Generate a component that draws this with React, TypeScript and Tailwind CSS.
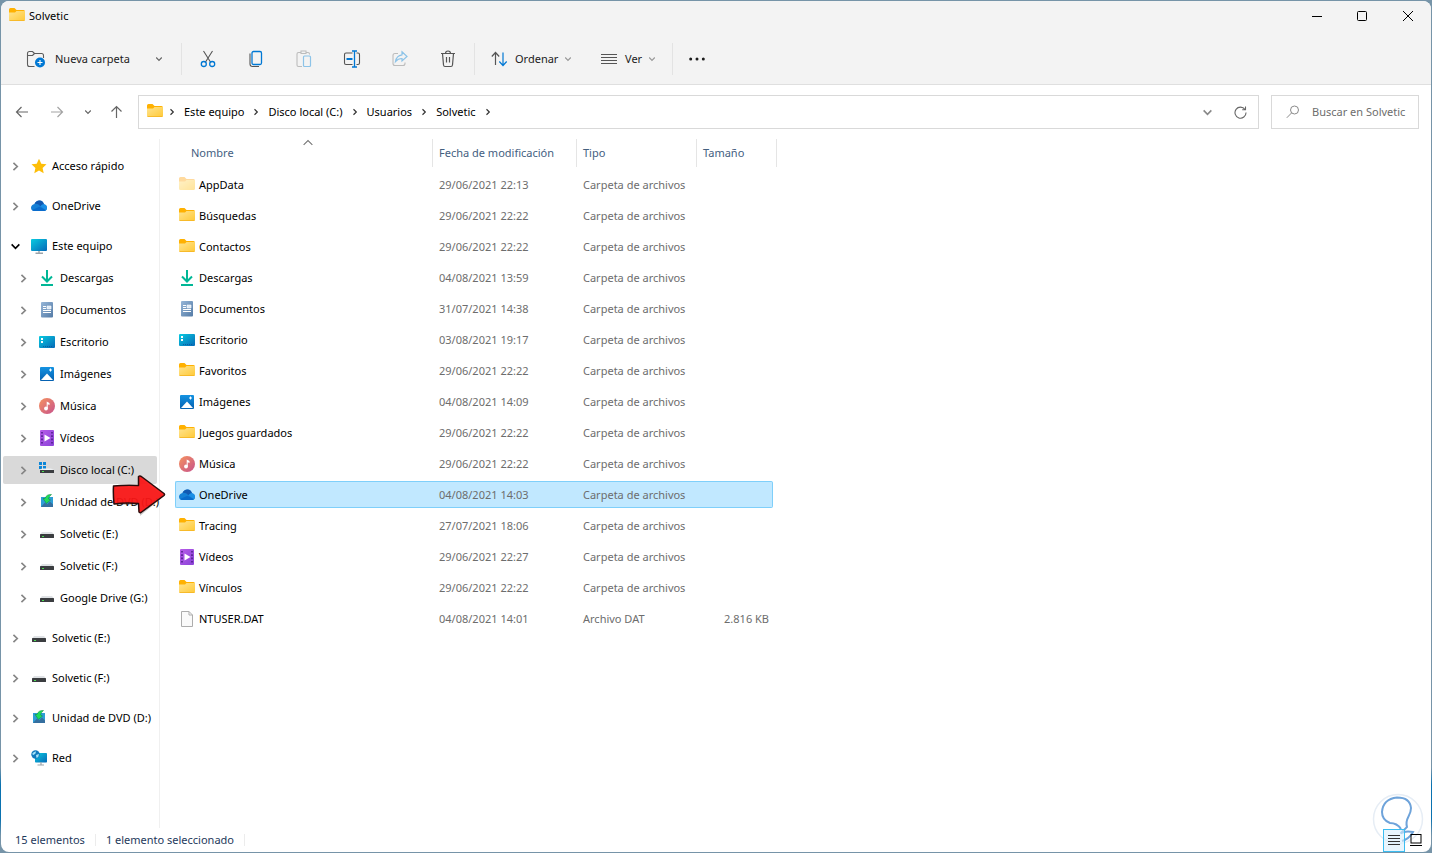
import { useState } from 'react';
import type { ReactNode } from 'react';

type IconName =
  | 'folder' | 'folderFaded' | 'download' | 'document' | 'desktop' | 'picture' | 'music' | 'video'
  | 'cloud' | 'file' | 'star' | 'computer' | 'system' | 'dvd' | 'drive' | 'network';

// Shared gradients, referenced by id from every small icon
function IconDefs() {
  return (
    <svg width="0" height="0" className="absolute" aria-hidden>
      <defs>
        <linearGradient id="gFolder" x1="0" y1="0" x2="1" y2="1">
          <stop offset="0" stopColor="#ffe48f" />
          <stop offset="1" stopColor="#ffc937" />
        </linearGradient>
        <linearGradient id="gScreen" x1="0" y1="0" x2="1" y2="1">
          <stop offset="0" stopColor="#09cbe0" />
          <stop offset="1" stopColor="#0669b8" />
        </linearGradient>
        <linearGradient id="gDoc" x1="0" y1="0" x2="1" y2="1">
          <stop offset="0" stopColor="#96b6d8" />
          <stop offset="1" stopColor="#547ba6" />
        </linearGradient>
        <linearGradient id="gPic" x1="0" y1="0" x2="0" y2="1">
          <stop offset="0" stopColor="#1493e2" />
          <stop offset="1" stopColor="#0560b0" />
        </linearGradient>
        <linearGradient id="gMusic" x1="0" y1="0" x2="1" y2="1">
          <stop offset="0" stopColor="#f6935f" />
          <stop offset="1" stopColor="#c7538c" />
        </linearGradient>
        <linearGradient id="gVideo" x1="0" y1="0" x2="1" y2="1">
          <stop offset="0" stopColor="#b75be8" />
          <stop offset="1" stopColor="#8a43d8" />
        </linearGradient>
      </defs>
    </svg>
  );
}

const drawings: Record<IconName, ReactNode> = {
  folder: (
    <>
      <path d="M0 1.500Q0 0 1.500 0H5.500L7.500 2H14.500Q16 2 16 3.500V6H0Z" fill="#ffb101" />
      <path d="M0 4.500H6L7.500 3H16V11.500Q16 13 14.500 13H1.500Q0 13 0 11.500Z" fill="url(#gFolder)" />
      <path d="M.5 12.500H15.500" stroke="#f5b41f" strokeWidth=".8" />
    </>
  ),
  folderFaded: (
    <g opacity=".5">
      <path d="M0 1.500Q0 0 1.500 0H5.500L7.500 2H14.500Q16 2 16 3.500V6H0Z" fill="#ffb640" />
      <path d="M0 4.500H6L7.500 3H16V11.500Q16 13 14.500 13H1.500Q0 13 0 11.500Z" fill="url(#gFolder)" />
    </g>
  ),
  download: (
    <g fill="none" stroke="#00b796" strokeWidth="2">
      <path d="M8 0V11M3 6.500L8 11.500L13 6.500" />
      <path d="M2 15H14" />
    </g>
  ),
  document: (
    <>
      <rect x="2" y="0" width="12" height="15.500" rx="1" fill="url(#gDoc)" />
      <path d="M4 4.500H7M4 6.500H7M4 8.500H12M4 10.500H12" stroke="#fff" strokeWidth="1" />
      <path d="M8 4H12V7H8Z" fill="#dce8f5" stroke="#fff" strokeWidth=".6" />
    </>
  ),
  desktop: (
    <>
      <rect x="0" y="2" width="16" height="12" rx="1" fill="url(#gScreen)" />
      <path d="M2 5H4M2 8H4" stroke="#fff" strokeWidth="1.800" />
      <path d="M4 12.500H14" stroke="#0a4f91" strokeWidth=".7" strokeDasharray="1 1" />
    </>
  ),
  picture: (
    <>
      <rect x="1" y="1" width="14" height="14" rx="1" fill="url(#gPic)" />
      <path d="M2 14L8 7.500L14 14Z" fill="#fff" />
      <path d="M11.500 2.500V5.500M10 4H13" stroke="#fff" strokeWidth="1" />
    </>
  ),
  music: (
    <>
      <circle cx="8" cy="8" r="8" fill="url(#gMusic)" />
      <path d="M7.700 10.500V3.500L10.500 5V7L8.700 6.200V10.500Z" fill="#fff" />
      <circle cx="7" cy="10.500" r="1.900" fill="#fff" />
    </>
  ),
  video: (
    <>
      <rect x="1" y="0" width="14" height="16" rx="1" fill="url(#gVideo)" />
      <path d="M3 2V14M13 2V14" stroke="#4b1d85" strokeWidth="1.500" strokeDasharray="1.600 1.700" />
      <path d="M5.500 4.500L11.500 8L5.500 11.500Z" fill="#fff" />
    </>
  ),
  cloud: (
    <>
      <path d="M3 13Q0 12.700 0 9.600Q.4 6.500 3.500 6Q4.800 2.500 8.500 2.500Q12 2.700 13 6.200Q16 7 16 10Q15.800 13 13 13Z" fill="#1580d6" />
      <path d="M3.500 6Q4.800 2.500 8.500 2.500Q12 2.700 13 6.200Q11 6 9.500 8.200Q6.500 5.300 3.500 6Z" fill="#1259b2" />
      <path d="M9.500 8.200Q11 6 13 6.200Q16 7 16 10Q16 11.500 15 12.300Z" fill="#1b8fe6" />
      <path d="M1 12L8.500 8.800L15 12.300Q14.200 13 13 13H3Q1.800 13 1 12Z" fill="#0a6ccc" />
    </>
  ),
  file: (
    <path d="M2.500.5H10L13.500 4V15.500H2.500ZM10 .5V4H13.500" fill="#fafafa" stroke="#adadad" strokeWidth="1" />
  ),
  star: <path d="M8 .8L10.300 5.700L15.500 6.300L11.600 9.900L12.700 15.200L8 12.500L3.300 15.200L4.400 9.900L.5 6.300L5.700 5.700Z" fill="#fdbe08" />,
  computer: (
    <>
      <rect x="0" y="1" width="16" height="12" rx="1" fill="url(#gScreen)" />
      <path d="M8 13V15M4.500 15.200H12" stroke="#9aa3aa" strokeWidth="1.400" />
    </>
  ),
  system: (
    <>
      <path d="M0 0H3V3H0ZM4 0H7V3H4ZM0 4H3V7H0ZM4 4H7V7H4Z" fill="#0b86d8" />
      <path d="M1 8L3 6.500H12L15 8Z" fill="#eceff1" />
      <rect x="1" y="8" width="14" height="3" fill="#3a3d40" />
      <rect x="3" y="9" width="2" height="1" fill="#4ade51" />
    </>
  ),
  dvd: (
    <>
      <path d="M2 3H14V13H2Z" fill="#2d9ed6" />
      <path d="M2 13L6 8.500L8 10.500L11 7.500L14 10.500V13Z" fill="#356f9f" />
      <path d="M12.500 .5Q7.500 0 6 4.500H4L7.500 9.500L11.500 6L9.500 5Q10 2.500 12.500 .5Z" fill="#1fdc5a" stroke="#12803b" strokeWidth=".5" />
    </>
  ),
  drive: (
    <>
      <path d="M1 8.500L3 6H13L15 8.500Z" fill="#dfe2e5" />
      <rect x="1" y="8" width="14" height="4" rx=".5" fill="#3b3d40" />
      <rect x="3" y="10" width="2" height="1" fill="#4ade51" />
    </>
  ),
  network: (
    <>
      <rect x="4" y="3" width="12" height="9.500" rx=".8" fill="url(#gScreen)" />
      <path d="M10 12V14.500M6.500 15H13" stroke="#9aa3aa" strokeWidth="1.200" />
      <circle cx="4.500" cy="4.500" r="4.200" fill="#1279bd" />
      <path d="M1 4Q3 1 5 1.500L4.500 3.500L2.500 5ZM5 5L8 4Q8 7 5.500 8Z" fill="#a6e3f7" />
    </>
  ),
};

function Icon({ name }: { name: IconName }) {
  return (
    <svg width="16" height="16" viewBox="0 0 16 16" className="shrink-0" aria-hidden>
      {drawings[name]}
    </svg>
  );
}

function Chevron({ dir, size = 8, className = '' }: { dir: 'right' | 'down' | 'up'; size?: number; className?: string }) {
  const d = { right: 'M2.500 1.300L5.300 4L2.500 6.700', down: 'M1.200 2.500L4 5.300L6.800 2.500', up: 'M.5 5.500L4 2L7.500 5.500' }[dir];
  return (
    <svg width={size} height={size} viewBox="0 0 8 8" fill="none" stroke="currentColor" className={`shrink-0 ${className}`} aria-hidden>
      <path d={d} strokeWidth={dir === 'up' ? 0.9 : 1.2} />
    </svg>
  );
}

type NavEntry = { label: string; icon: IconName; child?: boolean; open?: boolean };

const navEntries: NavEntry[] = [
  { label: 'Acceso rápido', icon: 'star' },
  { label: 'OneDrive', icon: 'cloud' },
  { label: 'Este equipo', icon: 'computer', open: true },
  { label: 'Descargas', icon: 'download', child: true },
  { label: 'Documentos', icon: 'document', child: true },
  { label: 'Escritorio', icon: 'desktop', child: true },
  { label: 'Imágenes', icon: 'picture', child: true },
  { label: 'Música', icon: 'music', child: true },
  { label: 'Vídeos', icon: 'video', child: true },
  { label: 'Disco local (C:)', icon: 'system', child: true },
  { label: 'Unidad de DVD (D:)', icon: 'dvd', child: true },
  { label: 'Solvetic (E:)', icon: 'drive', child: true },
  { label: 'Solvetic (F:)', icon: 'drive', child: true },
  { label: 'Google Drive (G:)', icon: 'drive', child: true },
  { label: 'Solvetic (E:)', icon: 'drive' },
  { label: 'Solvetic (F:)', icon: 'drive' },
  { label: 'Unidad de DVD (D:)', icon: 'dvd' },
  { label: 'Red', icon: 'network' },
];

type FileEntry = { name: string; icon: IconName; date: string; type?: string; size?: string };

const files: FileEntry[] = [
  { name: 'AppData', icon: 'folderFaded', date: '29/06/2021 22:13' },
  { name: 'Búsquedas', icon: 'folder', date: '29/06/2021 22:22' },
  { name: 'Contactos', icon: 'folder', date: '29/06/2021 22:22' },
  { name: 'Descargas', icon: 'download', date: '04/08/2021 13:59' },
  { name: 'Documentos', icon: 'document', date: '31/07/2021 14:38' },
  { name: 'Escritorio', icon: 'desktop', date: '03/08/2021 19:17' },
  { name: 'Favoritos', icon: 'folder', date: '29/06/2021 22:22' },
  { name: 'Imágenes', icon: 'picture', date: '04/08/2021 14:09' },
  { name: 'Juegos guardados', icon: 'folder', date: '29/06/2021 22:22' },
  { name: 'Música', icon: 'music', date: '29/06/2021 22:22' },
  { name: 'OneDrive', icon: 'cloud', date: '04/08/2021 14:03' },
  { name: 'Tracing', icon: 'folder', date: '27/07/2021 18:06' },
  { name: 'Vídeos', icon: 'video', date: '29/06/2021 22:27' },
  { name: 'Vínculos', icon: 'folder', date: '29/06/2021 22:22' },
  { name: 'NTUSER.DAT', icon: 'file', date: '04/08/2021 14:01', type: 'Archivo DAT', size: '2.816 KB' },
];

function TitleBar() {
  return (
    <header className="flex h-[29px] shrink-0 items-center bg-[#f3f3f3] pl-2">
      <Icon name="folder" />
      <h1 className="ml-1 flex-1">Solvetic</h1>
      <button type="button" aria-label="Minimizar" className="flex h-full w-[45px] items-center justify-center hover:bg-black/5">
        <svg width="10" height="10" viewBox="0 0 10 10" stroke="#000" aria-hidden><path d="M0 5.500H10" /></svg>
      </button>
      <button type="button" aria-label="Maximizar" className="flex h-full w-[45px] items-center justify-center hover:bg-black/5">
        <svg width="10" height="10" viewBox="0 0 10 10" fill="none" stroke="#000" aria-hidden><rect x=".5" y=".5" width="9" height="9" rx="1" /></svg>
      </button>
      <button type="button" aria-label="Cerrar" className="flex h-full w-[47px] items-center justify-center hover:bg-red-600">
        <svg width="10" height="10" viewBox="0 0 10 10" stroke="#000" aria-hidden><path d="M0 0L10 10M10 0L0 10" /></svg>
      </button>
    </header>
  );
}

function ToolButton({ label, children }: { label: string; children: ReactNode }) {
  return (
    <button type="button" aria-label={label} className="flex h-8 w-12 items-center justify-center rounded hover:bg-black/5">
      <svg width="18" height="18" viewBox="0 0 18 18" fill="none" stroke="#555" strokeWidth="1.100" aria-hidden>
        {children}
      </svg>
    </button>
  );
}

function Toolbar() {
  return (
    <div role="toolbar" aria-label="Comandos" className="flex h-[55px] shrink-0 items-center border-b border-[#dfdfdf] bg-[#f3f3f3] pt-1 pl-[25px] text-[#1b1b1b]">
      <button type="button" className="flex h-8 w-[155px] items-center">
        <svg width="20" height="18" viewBox="0 0 20 18" fill="none" stroke="#5c5c5c" strokeWidth="1.100" className="shrink-0" aria-hidden>
          <path d="M8.500 16.500H3.500Q1.500 16.500 1.500 14.500V3.500Q1.500 1.500 3.500 1.500H6.500L8.500 3.500H15.500Q17.500 3.500 17.500 5.500V8M1.500 5.500H6.500L8.500 3.500" />
          <circle cx="14" cy="12.500" r="5" fill="#0078d4" stroke="none" />
          <path d="M14 10V15M11.500 12.500H16.500" stroke="#fff" />
        </svg>
        <span className="ml-[9px] flex-1 text-left">Nueva carpeta</span>
        <Chevron dir="down" className="mr-[18px] text-[#666]" />
      </button>
      <span className="h-8 w-px bg-[#e3e3e3]" />
      <div className="ml-0.5 flex">
        <ToolButton label="Cortar">
          <path d="M4.500 1L11.800 12.500M13.500 1L6.200 12.500" />
          <circle cx="4.800" cy="14" r="2.500" stroke="#0078d4" strokeWidth="1.300" />
          <circle cx="13.200" cy="14" r="2.500" stroke="#0078d4" strokeWidth="1.300" />
        </ToolButton>
        <ToolButton label="Copiar">
          <path d="M3 3.500V14Q3 16.500 5.500 16.500H12" />
          <rect x="5" y="1.500" width="9.500" height="13" rx="1.500" stroke="#0078d4" strokeWidth="1.300" />
        </ToolButton>
        <ToolButton label="Pegar">
          <path d="M5.500 2.500H3.500Q2 2.500 2 4V15Q2 16.500 3.500 16.500H7M11.500 2.500H13Q14.500 2.500 14.500 4V4.500M6 1H11V3.500H6Z" stroke="#bcbcbc" />
          <rect x="8.500" y="6" width="7" height="10.500" rx="1" stroke="#8cc3e8" strokeWidth="1.200" />
        </ToolButton>
        <ToolButton label="Cambiar nombre">
          <path d="M9.500 3H3Q1.500 3 1.500 4.500V13Q1.500 14.500 3 14.500H9.500M13.500 3H15Q16.500 3 16.500 4.500V13Q16.500 14.500 15 14.500H13.500" />
          <path d="M3.500 9H9.500" stroke="#0078d4" strokeWidth="2" />
          <path d="M11.500 1.500V16.500M9 1H14M9 17H14" stroke="#0078d4" strokeWidth="1.300" />
        </ToolButton>
        <ToolButton label="Compartir">
          <path d="M7 3.500H4Q2 3.500 2 5.500V13.500Q2 15.500 4 15.500H12Q14 15.500 14 13.500V12.500" stroke="#bcbcbc" />
          <path d="M11 1.800L16 6.500L11 11V8.500Q7 8.500 4.500 11.500Q5.500 5.500 11 4.800Z" stroke="#8cc3e8" strokeWidth="1.200" />
        </ToolButton>
        <ToolButton label="Eliminar">
          <path d="M2 3.500H16M6.500 3.500Q6.500 1 9 1Q11.500 1 11.500 3.500M3.500 3.500L4.500 15Q4.700 16.500 6 16.500H12Q13.300 16.500 13.500 15L14.500 3.500M7.500 7V12.500M10.500 7V12.500" strokeWidth="1.200" />
        </ToolButton>
      </div>
      <span className="ml-0.5 h-8 w-px bg-[#e3e3e3]" />
      <button type="button" className="ml-4 flex h-8 w-[110px] items-center">
        <svg width="17" height="16" viewBox="0 0 17 16" fill="none" strokeWidth="1.200" aria-hidden>
          <path d="M4.500 14V1.500M.8 5.500L4.500 1.500L8.200 5.500" stroke="#555" />
          <path d="M12 1.500V14M8.300 10.500L12 14.500L15.700 10.500" stroke="#0078d4" />
        </svg>
        <span className="ml-[7px]">Ordenar</span>
        <Chevron dir="down" className="ml-1.5 text-[#999]" />
      </button>
      <button type="button" className="flex h-8 w-[71px] items-center">
        <svg width="16" height="12" viewBox="0 0 16 12" stroke="#555" aria-hidden>
          <path d="M0 1.500H16M0 4.500H16M0 7.500H16M0 10.500H16" />
        </svg>
        <span className="ml-2">Ver</span>
        <Chevron dir="down" className="ml-1.5 text-[#999]" />
      </button>
      <span className="h-8 w-px bg-[#e3e3e3]" />
      <button type="button" aria-label="Ver más" className="flex h-8 w-12 items-center justify-center">
        <svg width="16" height="4" viewBox="0 0 16 4" fill="#1b1b1b" aria-hidden>
          <circle cx="1.700" cy="2" r="1.500" />
          <circle cx="8" cy="2" r="1.500" />
          <circle cx="14.300" cy="2" r="1.500" />
        </svg>
      </button>
    </div>
  );
}

function ArrowIcon({ d }: { d: string }) {
  return (
    <svg width="14" height="14" viewBox="0 0 14 14" fill="none" stroke="currentColor" strokeWidth="1.200" aria-hidden>
      <path d={d} />
    </svg>
  );
}

function AddressRow() {
  return (
    <div className="flex h-[54px] shrink-0 items-center pr-3 pl-3.5">
      <div className="flex w-[123px] shrink-0 items-center text-[#666]">
        <button type="button" aria-label="Atrás"><ArrowIcon d="M13 7H1.500M6.500 2L1.500 7L6.500 12" /></button>
        <button type="button" aria-label="Adelante" className="ml-[21px] text-[#a3a3a3]"><ArrowIcon d="M1 7H12.500M7.500 2L12.500 7L7.500 12" /></button>
        <button type="button" aria-label="Ubicaciones recientes" className="ml-5"><Chevron dir="down" /></button>
        <button type="button" aria-label="Arriba" className="ml-[18px]"><ArrowIcon d="M6.500 13V1.500M1.500 6.500L6.500 1.500L11.500 6.500" /></button>
      </div>
      <nav aria-label="Ruta" className="flex h-[34px] flex-1 items-center border border-[#d9d9d9] pl-2">
        <Icon name="folder" />
        <Chevron dir="right" className="ml-[5px] text-[#333]" />
        {['Este equipo', 'Disco local (C:)', 'Usuarios', 'Solvetic'].map((part) => (
          <span key={part} className="ml-2 flex items-center">
            <a href="#" className="hover:underline">{part}</a>
            <Chevron dir="right" className="ml-2 text-[#333]" />
          </span>
        ))}
        <button type="button" aria-label="Ubicaciones anteriores" className="ml-auto text-[#888]"><Chevron dir="down" size={11} /></button>
        <button type="button" aria-label="Actualizar" className="mr-[11px] ml-[21px] text-[#666]">
          <svg width="13" height="13" viewBox="0 0 13 13" fill="none" stroke="currentColor" strokeWidth="1.100" aria-hidden>
            <path d="M11 3.500A5.500 5.500 0 1 0 12 6.500M11.500 .5V3.800H8.200" />
          </svg>
        </button>
      </nav>
      <label className="ml-3 flex h-[34px] w-[148px] shrink-0 items-center border border-[#d9d9d9] pl-3.5">
        <svg width="14" height="14" viewBox="0 0 14 14" fill="none" stroke="#8a8a8a" className="shrink-0" aria-hidden>
          <circle cx="8.500" cy="5" r="4" />
          <path d="M5.700 7.800L.8 12.800" />
        </svg>
        <input type="search" aria-label="Buscar" placeholder="Buscar en Solvetic" className="ml-3 w-full min-w-0 outline-none placeholder:text-[#6d6d6d]" />
      </label>
    </div>
  );
}

function NavPane() {
  const [current, setCurrent] = useState(9);

  return (
    <nav aria-label="Panel de navegación" className="relative w-[159px] shrink-0 border-r border-[#f0f0f0] pt-[3px] pl-0.5">
      <ul className="w-[154px]">
        {navEntries.map((entry, i) => (
          <li key={i} className={entry.child ? 'py-0.5' : 'pt-2.5 pb-0.5'}>
            <div className={`flex h-7 items-center rounded-xs ${entry.child ? 'pl-[15px]' : 'pl-[7px]'} ${i === current ? 'bg-[#d9d9d9]' : ''}`}>
              <button type="button" aria-label={`Expandir ${entry.label}`} aria-expanded={!!entry.open} className="shrink-0">
                <Chevron dir={entry.open ? 'down' : 'right'} size={11} className={entry.open ? 'text-black' : 'text-[#858585]'} />
              </button>
              <button type="button" className="ml-2.5 flex items-center gap-[5px] whitespace-nowrap" onClick={() => setCurrent(i)}>
                <Icon name={entry.icon} />
                {entry.label}
              </button>
            </div>
          </li>
        ))}
      </ul>
      {/* Pointer towards the selected row */}
      <svg width="58" height="44" viewBox="0 0 58 44" className="pointer-events-none absolute top-[335px] left-[109px] z-10" aria-hidden>
        <path d="M4 14H29V4L54 22L30 42V31H4Z" fill="#555" opacity=".3" />
        <path d="M3.500 12Q14 11 28.500 11.500V2.500Q30 1.500 32 3L54 19.500Q55 20.500 54 21.500L31 38.500Q29.500 39 29 38L28.500 29.500Q15 28.500 4 30Q3 20 3.500 12Z" fill="#fb1414" fillOpacity=".93" stroke="#2b0b0b" strokeWidth="1.500" strokeLinejoin="round" />
      </svg>
    </nav>
  );
}

function FileTable() {
  const [selected, setSelected] = useState('OneDrive');

  return (
    <main className="min-w-0 flex-1 overflow-hidden pl-[15px]">
      <table className="w-[602px] table-fixed border-separate border-spacing-0 text-left">
        <colgroup>
          <col className="w-[257px]" />
          <col className="w-36" />
          <col className="w-[120px]" />
          <col className="w-[77px]" />
          <col className="w-1" />
        </colgroup>
        <thead className="text-[#44607f]">
          <tr className="h-7">
            <th className="relative pl-4 font-normal">
              Nombre
              <Chevron dir="up" size={10} className="absolute -top-px left-[128px] text-[#777]" />
            </th>
            <th className="border-l border-[#e5e5e5] pl-1.5 font-normal">Fecha de modificación</th>
            <th className="border-l border-[#e5e5e5] pl-1.5 font-normal">Tipo</th>
            <th className="border-l border-[#e5e5e5] pl-1.5 font-normal">Tamaño</th>
            <td className="border-r border-[#e5e5e5]" />
          </tr>
        </thead>
        <tbody className="text-[#6d6d6d]">
          <tr className="h-1" aria-hidden><td colSpan={5} /></tr>
          {files.map((file) => {
            const cell = file.name === selected ? 'border-[#7fcffa] bg-[#c1e8ff]' : 'border-transparent';
            return (
              <tr key={file.name} onClick={() => setSelected(file.name)}>
                <td className="pb-1">
                  <div className={`flex h-[27px] items-center gap-1 rounded-l-xs border-y border-l pl-[3px] text-black ${cell}`}>
                    <Icon name={file.icon} />
                    {file.name}
                  </div>
                </td>
                <td className="pb-1"><div className={`flex h-[27px] items-center border-y pl-[7px] ${cell}`}>{file.date}</div></td>
                <td className="pb-1"><div className={`flex h-[27px] items-center border-y pl-[7px] ${cell}`}>{file.type ?? 'Carpeta de archivos'}</div></td>
                <td className="pb-1"><div className={`flex h-[27px] items-center justify-end rounded-r-xs border-y border-r pr-[3px] ${cell}`}>{file.size}</div></td>
                <td />
              </tr>
            );
          })}
        </tbody>
      </table>
    </main>
  );
}

function StatusBar() {
  return (
    <footer className="relative flex h-6 shrink-0 items-center pl-3.5 text-[#1e395b]">
      <span>15 elementos</span>
      <span className="ml-2.5 h-3 w-px bg-[#ececec]" />
      <span className="ml-2.5">1 elemento seleccionado</span>
      <span className="ml-2.5 h-3 w-px bg-[#ececec]" />
      <svg width="52" height="52" viewBox="0 0 52 52" fill="none" className="absolute right-[7px] bottom-[7px]" aria-hidden>
        <circle cx="26" cy="26" r="24.500" fill="#fff" stroke="#e6edf5" strokeWidth="1.500" />
        <path d="M29 36Q25 30 18 30Q10 27 10 19Q11 6 25 4.500Q38 4.500 39 15Q39 19 36.500 23.500Q33.500 29 35 34L28.500 40.500Q33 37.500 41 39Q37 46 30 48" stroke="#6ea3da" strokeWidth="2" />
      </svg>
      <button type="button" aria-label="Detalles" className="relative ml-auto flex h-[23px] w-[22px] items-center justify-center border border-[#3bbcf0] bg-[#d8effb]/60">
        <svg width="12" height="12" viewBox="0 0 12 12" stroke="#333" aria-hidden><path d="M0 1.500H12M0 4.500H12M0 7.500H12M0 10.500H12" /></svg>
      </button>
      <button type="button" aria-label="Iconos grandes" className="relative mr-1 flex h-[23px] w-[22px] items-center justify-center">
        <svg width="12" height="12" viewBox="0 0 12 12" fill="none" stroke="#000" aria-hidden>
          <rect x="1" y=".5" width="10" height="8.500" />
          <path d="M0 11.500H12" />
        </svg>
      </button>
    </footer>
  );
}

export default function App() {
  return (
    <div className="flex min-h-screen bg-[linear-gradient(180deg,#7694a8_0%,#7694a8_90%,#0a72b0_92%,#0a72b0_96%,#7694a8_98%)] p-px font-['Noto_Sans','Open_Sans',sans-serif] text-[11px] leading-4 text-black">
      <IconDefs />
      <div className="flex min-w-0 flex-1 flex-col overflow-hidden rounded-lg bg-white">
        <TitleBar />
        <Toolbar />
        <AddressRow />
        <div className="flex flex-1">
          <NavPane />
          <FileTable />
        </div>
        <StatusBar />
      </div>
    </div>
  );
}
